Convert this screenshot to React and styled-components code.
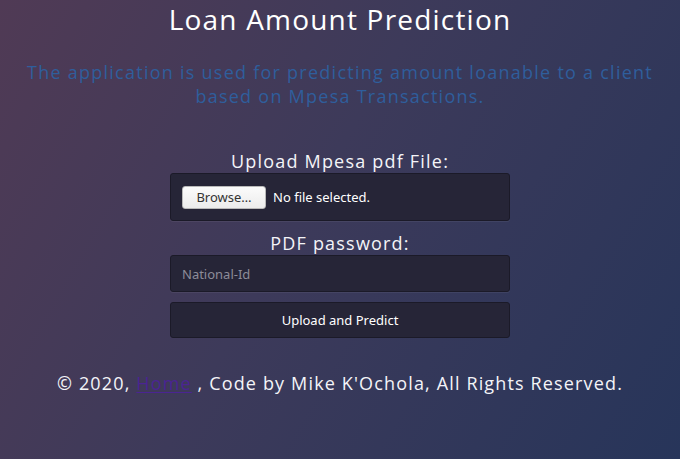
import React from 'react'
import styled, { createGlobalStyle } from 'styled-components'

const GlobalStyle = createGlobalStyle`
  html, body {
    margin: 0;
    padding: 0;
    height: 100%;
  }
  body {
    font-family: "Open Sans", "Noto Sans", sans-serif;
    background: linear-gradient(120deg, #503a55 0%, #3d3a5a 45%, #27355a 100%);
    min-height: 459px;
  }
`

const Page = styled.div`
  width: 100%;
  min-height: 459px;
  text-align: center;
  color: #fff;
  padding-top: 1px;
  box-sizing: border-box;
`

const Title = styled.h1`
  margin: 0;
  font-size: 28px;
  font-weight: 400;
  letter-spacing: 1.2px;
  line-height: 36px;
`

const Lead = styled.p`
  margin: 23px auto 0;
  width: 640px;
  font-size: 18px;
  line-height: 24px;
  letter-spacing: 1.25px;
  color: #2f5e9c;
`

const Form = styled.form`
  width: 340px;
  margin: 42px auto 0;
  display: flex;
  flex-direction: column;
`

const Label = styled.label`
  font-size: 18px;
  letter-spacing: 1.2px;
  line-height: 22px;
  color: #f4f4f8;
  margin-bottom: 1px;
`

const Field = styled.div`
  height: ${p => p.$h}px;
  box-sizing: border-box;
  background: #262537;
  border: 1px solid #1b1a28;
  border-radius: 3px;
  box-shadow: 0 1px 0 rgba(255,255,255,0.06);
  display: flex;
  align-items: center;
  padding: 0 11px;
  margin-bottom: ${p => p.$mb || 0}px;
  font-family: "Noto Sans", "Open Sans", sans-serif;
  font-size: 13px;
  color: ${p => p.$muted ? '#8d8c99' : '#fff'};
`

const Browse = styled.span`
  display: inline-flex;
  align-items: center;
  justify-content: center;
  width: 84px;
  height: 23px;
  box-sizing: border-box;
  background: linear-gradient(#fbfbfb, #ececec);
  border: 1px solid #b9b9b9;
  border-radius: 3px;
  color: #333;
  font-size: 13px;
  margin-right: 7px;
`

const Submit = styled.button`
  height: 36px;
  background: #262537;
  border: 1px solid #1b1a28;
  border-radius: 3px;
  color: #fff;
  font-family: "Noto Sans", "Open Sans", sans-serif;
  font-size: 13px;
  cursor: pointer;
`

const Footer = styled.p`
  margin: 33px 0 0;
  font-size: 18px;
  line-height: 25px;
  letter-spacing: 1.15px;
  color: #f4f4f8;
`

const HomeLink = styled.a`
  color: #4b2493;
  text-decoration: underline;
  text-decoration-thickness: 1px;
  text-underline-offset: 2px;
`

export default function App() {
  return (
    <>
      <GlobalStyle />
      <Page>
        <Title>Loan Amount Prediction</Title>
        <Lead>The application is used for predicting amount loanable to a client based on Mpesa Transactions.</Lead>
        <Form onSubmit={e => e.preventDefault()}>
          <Label>Upload Mpesa pdf File:</Label>
          <Field $h={48} $mb={11}>
            <Browse>Browse…</Browse>
            No file selected.
          </Field>
          <Label>PDF password:</Label>
          <Field $h={37} $mb={10} $muted>National-Id</Field>
          <Submit type="submit">Upload and Predict</Submit>
        </Form>
        <Footer>© 2020, <HomeLink href="#">Home</HomeLink> , Code by Mike K'Ochola, All Rights Reserved.</Footer>
      </Page>
    </>
  )
}
